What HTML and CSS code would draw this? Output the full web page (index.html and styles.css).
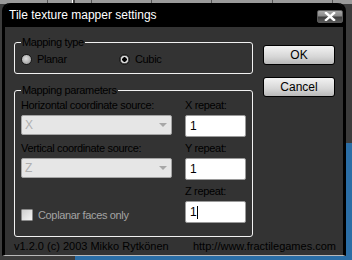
FILE: index.html
```html
<!DOCTYPE html>
<html lang="en">
<head>
    <meta charset="UTF-8">
    <title>Tile texture mapper settings</title>
    <link rel="stylesheet" href="styles.css">
</head>
<body>
    <div class="window">
        <div class="titlebar">
            <span class="title">Tile texture mapper settings</span>
            <button class="close" title="Close">
                <svg width="12" height="9" viewBox="0 0 12 9">
                    <path d="M2 1 L10 8 M10 1 L2 8" stroke="#fff" stroke-width="2.4" stroke-linecap="square"/>
                </svg>
            </button>
        </div>

        <div class="content">
            <div class="groups">
                <fieldset class="group group-type">
                    <legend>Mapping type</legend>
                    <div class="radios">
                        <label class="radio first"><input type="radio" name="type"> <span>Planar</span></label>
                        <label class="radio"><input type="radio" name="type" checked> <span>Cubic</span></label>
                    </div>
                </fieldset>

                <fieldset class="group group-params">
                    <legend>Mapping parameters</legend>
                    <div class="params">
                        <div class="sources">
                            <div class="label">Horizontal coordinate source:</div>
                            <div class="combo"><span>X</span><i class="arrow"></i></div>
                            <div class="label">Vertical coordinate source:</div>
                            <div class="combo"><span>Z</span><i class="arrow"></i></div>
                            <label class="check"><span class="box"></span> Coplanar faces only</label>
                        </div>
                        <div class="repeats">
                            <div class="label">X repeat:</div>
                            <input class="field" type="text" value="1">
                            <div class="label">Y repeat:</div>
                            <input class="field" type="text" value="1">
                            <div class="label">Z repeat:</div>
                            <div class="field focused">1<span class="caret"></span></div>
                        </div>
                    </div>
                </fieldset>
            </div>

            <div class="buttons">
                <button class="btn">OK</button>
                <button class="btn">Cancel</button>
            </div>
        </div>

        <div class="footer">
            <span>v1.2.0 (c) 2003 Mikko Rytkönen</span>
            <span>http://www.fractilegames.com</span>
        </div>
    </div>
</body>
</html>
```

FILE: styles.css
```css
* {
    box-sizing: border-box;
}

/* desktop behind the dialog */
html {
    background-color: #3c3c3c;
    background-image:
        linear-gradient(#2b6ea6, #2b6ea6),
        linear-gradient(#2b6ea6, #2b6ea6),
        linear-gradient(90deg, transparent 47px, #555 47px 48px, transparent 48px 72px, #fff 72px 73px, #444 73px 75px,
            transparent 75px 91px, #555 91px 92px, transparent 92px 151px, #555 151px 152px,
            transparent 152px 211px, #555 211px 212px, transparent 212px 272px, #555 272px 273px,
            transparent 273px 332px, #555 332px 333px, transparent 333px),
        linear-gradient(#9a9a9a, #9a9a9a);
    background-size: 6px 117px, 277px 4px, 352px 4px, 352px 4px;
    background-position: 346px 143px, 75px 256px, 0 0, 0 0;
    background-repeat: no-repeat;
}

body {
    margin: 0;
    width: 352px;
    height: 260px;
    overflow: hidden;
    font-family: "Liberation Sans", Arial, sans-serif;
    font-size: 11px;
    color: #000;
}

.window {
    margin: 3px 0 0 2px;
    width: 344px;
    height: 253px;
    background: #333333;
    border-left: 3px solid #000;
    border-right: 3px solid #000;
    border-bottom: 1px solid #b8b8b8;
    border-radius: 8px 8px 0 0;
    display: flex;
    flex-direction: column;
}

.titlebar {
    height: 24px;
    background: #000;
    border-radius: 6px 6px 0 0;
    display: flex;
    align-items: flex-start;
    justify-content: space-between;
    padding-left: 4px;
}

.title {
    color: #fff;
    font-size: 12px;
    line-height: 25px;
}

.close {
    margin-top: 7px;
    width: 26px;
    height: 13px;
    padding: 0;
    border: 1px solid #5a5a5a;
    border-radius: 2px;
    background: linear-gradient(#a8a8a8 0%, #8a8a8a 45%, #3c3c3c 55%, #5a5a5a 100%);
    display: flex;
    align-items: center;
    justify-content: center;
}

.close svg {
    display: block;
}

.content {
    display: flex;
    gap: 10px;
    padding: 9px 0 0 9px;
    letter-spacing: -0.35px;
}

.groups {
    width: 239px;
    display: flex;
    flex-direction: column;
    gap: 10px;
}

.group {
    margin: 0;
    padding: 0 6px;
    border: 1px solid #f2f2f2;
    border-radius: 3px;
    min-width: 0;
}

.group legend {
    padding: 0 1px;
    font-size: 11px;
    line-height: 13px;
    color: #000;
}

.radios {
    display: flex;
    align-items: center;
    padding: 3px 0 7px;
}

.radio {
    display: flex;
    align-items: center;
    gap: 5px;
    height: 14px;
}

.radio.first {
    width: 98px;
}

.radio input {
    appearance: none;
    margin: 0;
    width: 11px;
    height: 11px;
    border-radius: 50%;
    border: 1px solid #1a1a1a;
    background: radial-gradient(circle at 45% 40%, #e0e0e0 0%, #a8a8a8 70%, #7a7a7a 100%);
}

.radio input:checked {
    background: radial-gradient(circle, #000 0 2px, #d8d8d8 2.5px 3.5px, #555 4px);
}

.params {
    display: flex;
    gap: 13px;
    padding: 2px 0 8px;
}

.sources {
    width: 152px;
    display: flex;
    flex-direction: column;
}

.repeats {
    width: 61px;
    display: flex;
    flex-direction: column;
}

.label {
    line-height: 13px;
    height: 13px;
    margin-bottom: 3px;
}

.combo {
    height: 20px;
    border: 1px solid #a4a4a4;
    border-radius: 2px;
    background: #e6e6e6;
    color: #b0b0b0;
    display: flex;
    align-items: center;
    justify-content: space-between;
    padding: 0 4px 0 3px;
    font-size: 12px;
    margin-bottom: 7px;
}

.arrow {
    width: 0;
    height: 0;
    border-left: 4px solid transparent;
    border-right: 4px solid transparent;
    border-top: 4px solid #a8a8a8;
}

.check {
    display: flex;
    align-items: center;
    gap: 5px;
    margin-top: 24px;
    color: #a4a4a4;
}

.check .box {
    width: 12px;
    height: 12px;
    border: 1px solid #8a8a8a;
    border-radius: 1px;
    background: linear-gradient(135deg, #cfcfcf, #f4f4f4);
}

.field {
    height: 22px;
    margin: 0 0 5px;
    padding: 0 4px;
    border: 1px solid #9a9a9a;
    border-radius: 2px;
    background: #fff;
    font-family: "Liberation Sans", Arial, sans-serif;
    font-size: 12px;
    color: #000;
    display: flex;
    align-items: center;
}

.caret {
    width: 1px;
    height: 13px;
    background: #000;
    margin-left: 1px;
}

.buttons {
    width: 72px;
    margin-top: 9px;
    display: flex;
    flex-direction: column;
    gap: 12px;
}

.btn {
    height: 20px;
    padding: 0;
    border: 1px solid #000;
    border-radius: 3px;
    background: linear-gradient(#f2f2f2, #d6d6d6 60%, #b8b8b8);
    font-family: "Liberation Sans", Arial, sans-serif;
    font-size: 12px;
    color: #000;
    letter-spacing: 0;
}

.footer {
    margin-top: auto;
    display: flex;
    justify-content: space-between;
    padding: 0 7px 2px 9px;
    line-height: 13px;
}
```
